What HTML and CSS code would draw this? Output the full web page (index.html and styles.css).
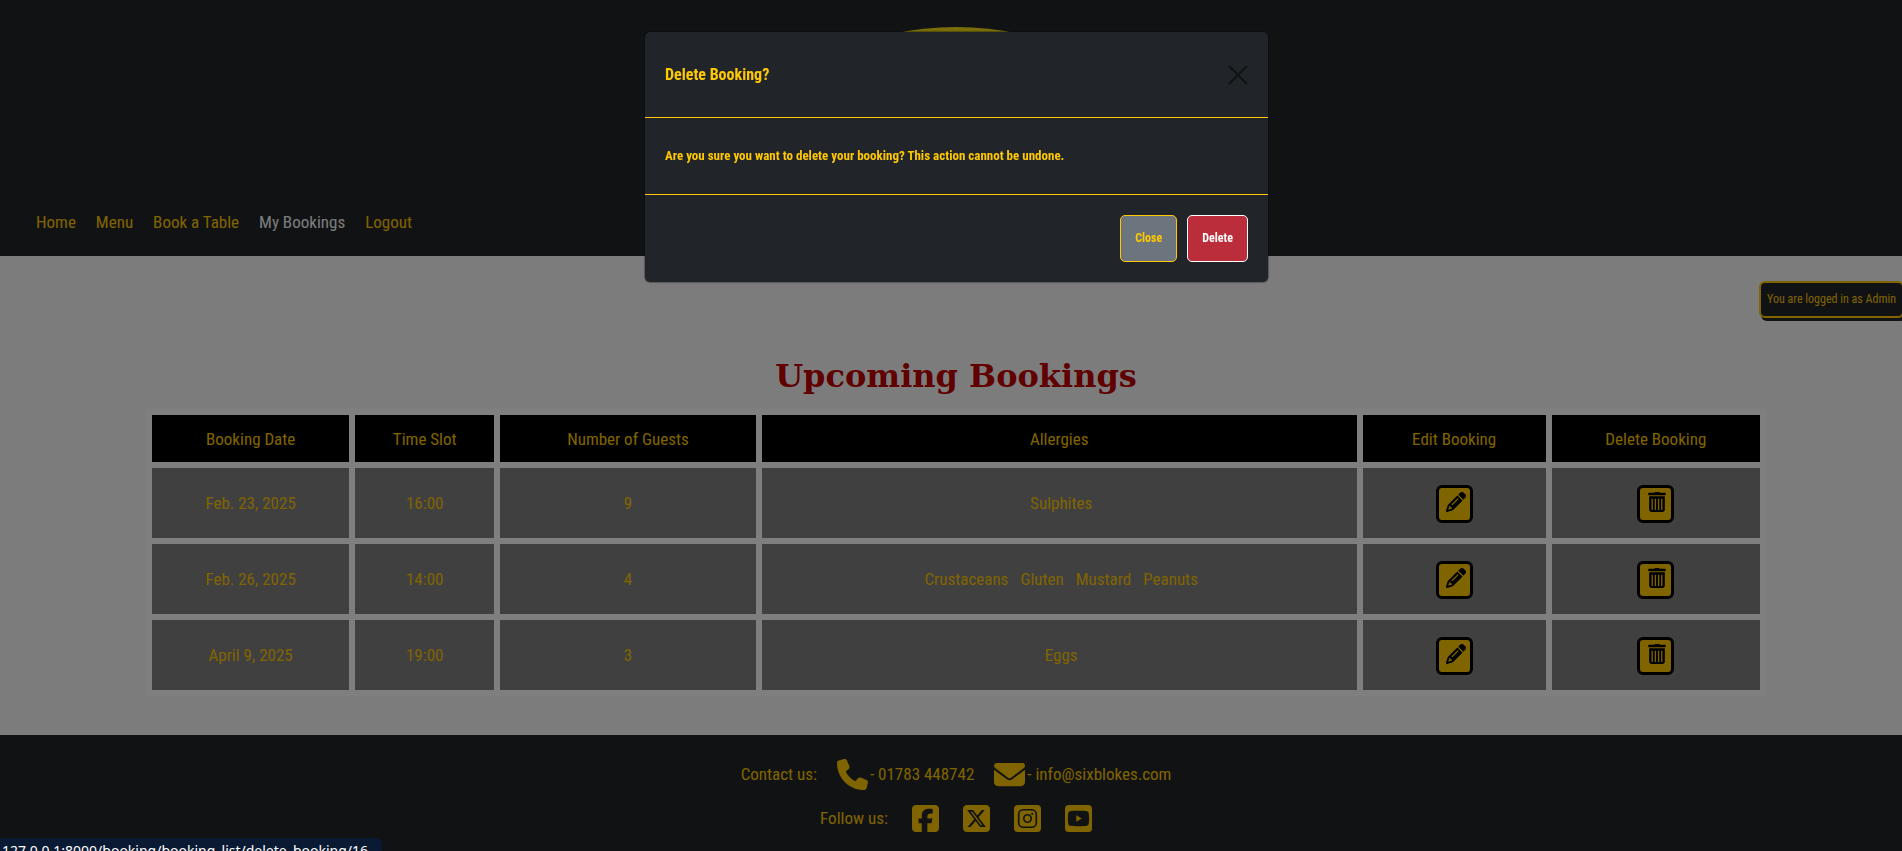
FILE: index.html
```html
<!DOCTYPE html>
<html lang="en">
<head>
<meta charset="utf-8">
<title>My Bookings</title>
<link rel="stylesheet" href="styles.css">
</head>
<body>
<svg class="sprite" aria-hidden="true">
  <symbol id="pencil" viewBox="0 0 512 512"><path d="M410.3 231l11.3-11.3-33.9-33.9-62.1-62.1L291.7 89.8l-11.3 11.3-22.6 22.6L58.6 322.9c-10.4 10.4-18 23.3-22.2 37.4L1 480.7c-2.5 8.4-.2 17.5 6.1 23.7s15.3 8.5 23.7 6.1l120.3-35.4c14.1-4.2 27-11.8 37.4-22.2L387.7 253.7 410.3 231zM160 399.4l-9.1 22.7c-4 3.1-8.5 5.4-13.3 6.9L59.4 452l23-78.1c1.4-4.9 3.8-9.4 6.9-13.3l22.7-9.1v32c0 8.8 7.2 16 16 16h32zM362.7 18.7L348.3 33.2 325.7 55.8 314.3 67.1l33.9 33.9 62.1 62.1 33.9 33.9 11.3-11.3 22.6-22.6 14.5-14.5c25-25 25-65.5 0-90.5L453.3 18.7c-25-25-65.5-25-90.5 0zm-47.4 168l-144 144c-6.2 6.2-16.4 6.2-22.6 0s-6.2-16.4 0-22.6l144-144c6.2-6.2 16.4-6.2 22.6 0s6.2 16.4 0 22.6z"/></symbol>
  <symbol id="trash" viewBox="0 0 448 512"><path fill-rule="evenodd" d="M155 22C160 8 166 0 178 0H270c12 0 18 8 23 22H432c9 0 16 8 16 17V65c0 9-7 17-16 17H16C7 82 0 74 0 65V39c0-9 7-17 16-17zM24 108H424V448c0 35-29 64-64 64H88c-35 0-64-29-64-64zM84 170V460h34V170zm82 0V460h34V170zm82 0V460h34V170zm82 0V460h34V170z"/></symbol>
</svg>
<div class="page">
  <header class="site-header">
    <svg class="logo" viewBox="0 0 344 190" aria-hidden="true"><ellipse cx="172" cy="95" rx="172" ry="95" fill="#f5dc14"/></svg>
    <nav class="nav" aria-label="Main">
      <a href="#">Home</a>
      <a href="#">Menu</a>
      <a href="#">Book a Table</a>
      <a href="#" class="active" aria-current="page">My Bookings</a>
      <a href="#">Logout</a>
    </nav>
  </header>
  <main class="main">
    <p class="login-badge">You are logged in as Admin</p>
    <h1 class="heading">Upcoming Bookings</h1>
    <div class="table-wrap">
      <table class="bookings">
        <colgroup><col class="c-date"><col class="c-time"><col class="c-guests"><col class="c-allergies"><col class="c-edit"><col class="c-delete"></colgroup>
        <thead>
          <tr><th>Booking Date</th><th>Time Slot</th><th>Number of Guests</th><th>Allergies</th><th>Edit Booking</th><th>Delete Booking</th></tr>
        </thead>
        <tbody>
          <tr>
            <td>Feb. 23, 2025</td><td>16:00</td><td>9</td>
            <td><div class="allergies"><span>Sulphites</span></div></td>
            <td><button class="icon-btn" aria-label="Edit booking"><svg><use href="#pencil"/></svg></button></td>
            <td><button class="icon-btn" aria-label="Delete booking"><svg><use href="#trash"/></svg></button></td>
          </tr>
          <tr>
            <td>Feb. 26, 2025</td><td>14:00</td><td>4</td>
            <td><div class="allergies"><span>Crustaceans</span><span>Gluten</span><span>Mustard</span><span>Peanuts</span></div></td>
            <td><button class="icon-btn" aria-label="Edit booking"><svg><use href="#pencil"/></svg></button></td>
            <td><button class="icon-btn" aria-label="Delete booking"><svg><use href="#trash"/></svg></button></td>
          </tr>
          <tr>
            <td>April 9, 2025</td><td>19:00</td><td>3</td>
            <td><div class="allergies"><span>Eggs</span></div></td>
            <td><button class="icon-btn" aria-label="Edit booking"><svg><use href="#pencil"/></svg></button></td>
            <td><button class="icon-btn" aria-label="Delete booking"><svg><use href="#trash"/></svg></button></td>
          </tr>
        </tbody>
      </table>
    </div>
  </main>
  <footer class="site-footer">
    <div class="contact">
      <span class="label">Contact us:</span>
      <span class="contact-item"><svg class="contact-icon" viewBox="0 0 512 512" aria-hidden="true"><path d="M164.900 24.600c-7.700-18.600-28-28.500-47.400-23.200l-88 24C12.100 30.200 0 46 0 64C0 311.400 200.600 512 448 512c18 0 33.800-12.100 38.600-29.500l24-88c5.300-19.400-4.600-39.700-23.200-47.400l-96-40c-16.300-6.800-35.200-2.100-46.300 11.600L304.700 368C234.300 334.700 177.300 277.700 144 207.300L193.300 167c13.700-11.200 18.400-30 11.600-46.300l-40-96z"/></svg>- 01783 448742</span>
      <span class="contact-item"><svg class="contact-icon" viewBox="0 0 512 512" aria-hidden="true"><path d="M48 64C21.500 64 0 85.500 0 112c0 15.100 7.100 29.300 19.200 38.400L236.800 313.600c11.400 8.500 27 8.500 38.400 0L492.800 150.400c12.100-9.100 19.200-23.300 19.200-38.400c0-26.500-21.500-48-48-48H48zM0 176V384c0 35.300 28.700 64 64 64H448c35.300 0 64-28.700 64-64V176L294.400 339.200c-22.800 17.100-54 17.100-76.800 0L0 176z"/></svg>- info@sixblokes.com</span>
    </div>
    <div class="follow">
      <span class="label">Follow us:</span>
      <a href="#" aria-label="Facebook"><svg viewBox="0 32 448 448"><path d="M64 32C28.700 32 0 60.700 0 96V416c0 35.300 28.700 64 64 64h98.200V334.200H109.400V256h52.800V222.300c0-87.100 39.400-127.500 125-127.500c16.200 0 44.200 3.200 55.700 6.400V172c-6-.6-16.500-1-29.600-1c-42 0-58.200 15.900-58.200 57.200V256h83.600l-14.400 78.200H255V480H384c35.300 0 64-28.700 64-64V96c0-35.300-28.700-64-64-64H64z"/></svg></a>
      <a href="#" aria-label="X"><svg viewBox="0 32 448 448"><path d="M64 32C28.700 32 0 60.700 0 96V416c0 35.300 28.700 64 64 64H384c35.300 0 64-28.700 64-64V96c0-35.300-28.700-64-64-64H64zm297.100 84L257.300 234.600 379.400 396H283.800L209 298.100 123.300 396H75.800l111-126.900L69.700 116h98l67.700 89.500L313.600 116h47.500zM323.300 367.600L153.400 142.900H125.100L296.900 367.600h26.300z"/></svg></a>
      <a href="#" aria-label="Instagram"><svg viewBox="0 0 448 448"><rect width="448" height="448" rx="64"/><g fill="none" stroke="#212529" stroke-width="27"><rect x="78" y="78" width="292" height="292" rx="76"/><circle cx="224" cy="224" r="62"/></g><circle cx="302" cy="146" r="18" fill="#212529"/></svg></a>
      <a href="#" aria-label="YouTube"><svg viewBox="0 0 448 448"><rect width="448" height="448" rx="64"/><path fill="#212529" d="M224 96c-60 0-120 2-140 8-16 4-26 16-29 30-9 50-9 130 0 180 3 14 13 26 29 30 40 11 240 11 280 0 16-4 26-16 29-30 9-50 9-130 0-180-3-14-13-26-29-30-20-6-80-8-140-8z"/><path d="M187 172v104l92-52z"/></svg></a>
    </div>
  </footer>
</div>
<div class="backdrop">
  <div class="modal" role="dialog" aria-modal="true" aria-labelledby="modal-title">
    <div class="modal-header">
      <h2 class="modal-title" id="modal-title">Delete Booking?</h2>
      <button class="modal-x" aria-label="Close"><svg viewBox="0 0 20 20"><path d="M1.500 1.500l17 17M18.500 1.500l-17 17" stroke="#101214" stroke-width="2" stroke-linecap="round"/></svg></button>
    </div>
    <div class="modal-body">Are you sure you want to delete your booking? This action cannot be undone.</div>
    <div class="modal-footer">
      <button class="btn btn-close">Close</button>
      <button class="btn btn-delete">Delete</button>
    </div>
  </div>
</div>
<div class="status">127.0.0.1:8000/booking/booking_list/delete_booking/16</div>
</body>
</html>
```

FILE: styles.css
```css
* { box-sizing: border-box; }

body {
  margin: 0;
  min-height: 100vh;
  overflow: hidden;
  background: #f8f9fa;
  color: #ffc800;
  font-family: "Roboto Condensed", Roboto, "Liberation Sans", sans-serif;
  font-size: 17px;
  line-height: 24px;
}

button { font: inherit; cursor: pointer; }
a { color: inherit; text-decoration: none; }
svg { fill: currentColor; display: block; }
.sprite { position: absolute; width: 0; height: 0; }

/* The page runs slightly past the right edge of the window. */
.page {
  width: calc(100% + 10px);
  min-height: 100vh;
  display: flex;
  flex-direction: column;
}

.site-header {
  background: #212529;
  padding: 27px 36px 22px;
  display: flex;
  flex-direction: column;
}
.logo { width: 100%; height: 183px; }
.nav { display: flex; gap: 20px; }
.nav .active { color: #f8f9fa; }

.main { display: flex; flex-direction: column; padding: 25px 0 39px; }
.login-badge {
  align-self: flex-end;
  margin: 0 8px 0 0;
  padding: 5px 6px 6px;
  border: 2px solid #ffc800;
  border-radius: 6px;
  background: #212529;
  box-shadow: 2px 3px 0 #212529;
  font-size: 12px;
  line-height: 22px;
}
.heading {
  margin: 38px 0 13px;
  text-align: center;
  color: #c00000;
  font-family: "DejaVu Serif", serif;
  font-size: 32px;
  line-height: 40px;
}
.table-wrap { padding: 0 146px; }
.bookings {
  width: 100%;
  table-layout: fixed;
  border-collapse: separate;
  border-spacing: 6px;
  background: #ffffff;
  text-align: center;
}
.c-date { width: 12.5%; }
.c-time { width: 8.8%; }
.c-guests { width: 16.2%; }
.c-allergies { width: 37.7%; }
.c-edit { width: 11.6%; }
.c-delete { width: 13.2%; }
.bookings th { height: 47px; padding: 0; background: #000000; font-weight: 400; }
.bookings td { height: 70px; padding: 0; background: #808080; }
.allergies { display: flex; justify-content: center; gap: 12px; padding-left: 4px; }
.icon-btn {
  display: block;
  margin: 2px auto 0;
  padding: 4px 4px 8px 7px;
  border: 3px solid #000000;
  border-radius: 6px;
  background: #ffc800;
  color: #000000;
}
.icon-btn svg { width: 20px; height: 20px; }

.site-footer {
  flex: 1;
  background: #212529;
  padding: 22px 0 18px;
  display: flex;
  flex-direction: column;
  gap: 10px;
}
.contact, .follow { display: flex; justify-content: center; align-items: center; height: 34px; }
.contact { gap: 20px; }
.contact-item { display: flex; align-items: center; gap: 2px; }
.contact-icon { width: 31px; height: 31px; }
.follow { gap: 24px; }
.follow svg { width: 27px; height: 27px; }

.backdrop {
  position: fixed;
  inset: 0 -11px 0 0;
  background: rgba(0, 0, 0, 0.5);
  display: flex;
  justify-content: center;
  align-items: flex-start;
  padding: 32px 16px;
}
.modal {
  width: 100%;
  max-width: 623px;
  background: #212529;
  border-radius: 5px;
  box-shadow: 0 0 1px 1px rgba(0, 0, 0, 0.3);
  font-weight: 700;
}
.modal-header {
  display: flex;
  justify-content: space-between;
  align-items: center;
  padding: 28px 20px 27px;
  border-bottom: 1px solid #ffc800;
}
.modal-title { margin: 0; font-size: 16px; line-height: 30px; }
.modal-x { padding: 0; border: 0; background: none; }
.modal-x svg { width: 20px; height: 20px; }
.modal-body { padding: 26px 20px; font-size: 13px; border-bottom: 1px solid #ffc800; }
.modal-footer { display: flex; justify-content: flex-end; gap: 10px; padding: 20px; }
.btn { padding: 10px 14px 11px; border: 1px solid; border-radius: 5px; font-size: 12px; font-weight: 700; }
.btn-close { background: #6c757d; color: #ffc800; }
.btn-delete { background: #bb2d3b; color: #ffffff; }

.status {
  position: fixed;
  left: 0;
  bottom: -12px;
  padding: 3px 14px 2px 2px;
  border-radius: 0 6px 0 0;
  background: #0a1a33;
  color: #ffffff;
  font-family: "Noto Sans", sans-serif;
  font-size: 14px;
  line-height: 20px;
}
```
